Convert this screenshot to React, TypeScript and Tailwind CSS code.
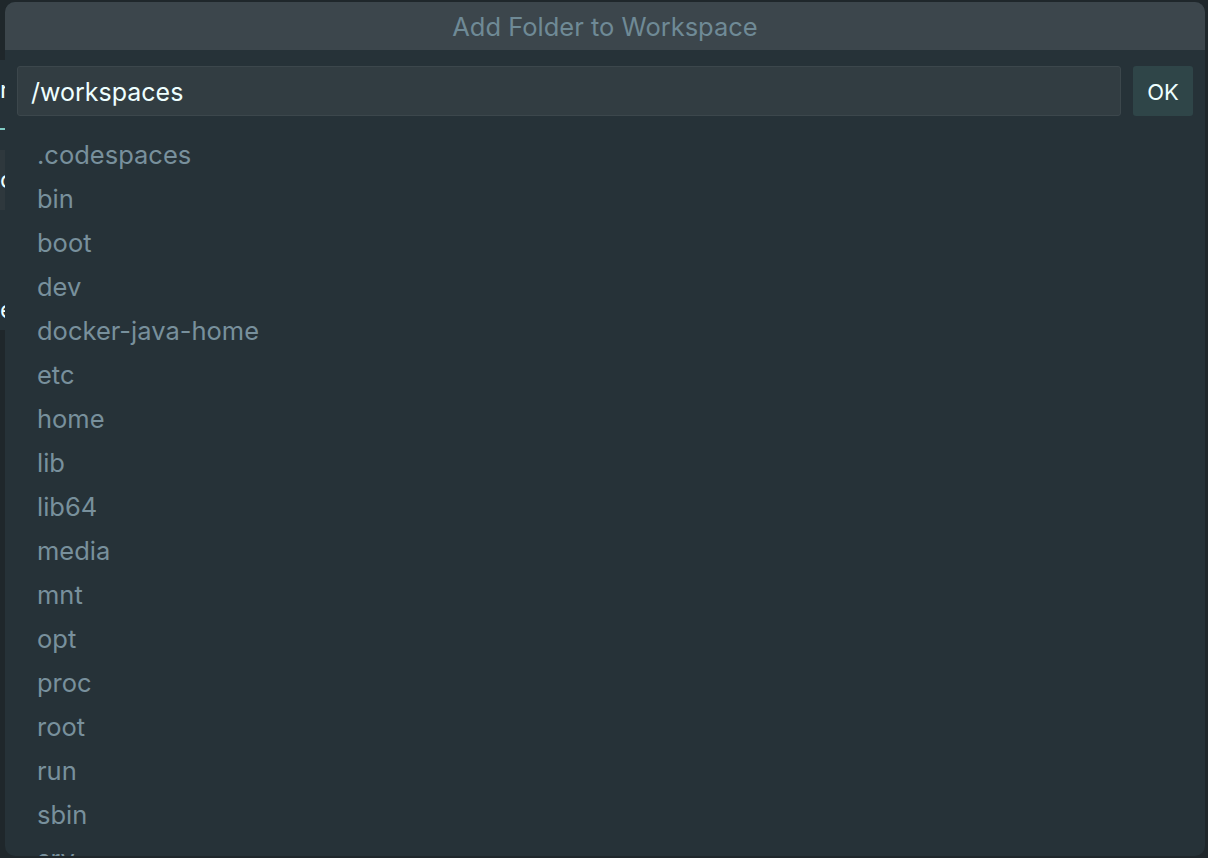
import React from 'react';

const folders = [
  '.codespaces',
  'bin',
  'boot',
  'dev',
  'docker-java-home',
  'etc',
  'home',
  'lib',
  'lib64',
  'media',
  'mnt',
  'opt',
  'proc',
  'root',
  'run',
  'sbin',
  'srv',
];

export default function App() {
  return (
    <div
      className="relative w-[1208px] h-[858px] overflow-hidden bg-[#1f272b]"
      style={{ fontFamily: 'Inter, "Noto Sans", sans-serif' }}
    >
      {/* Editor peeking out behind the dialog */}
      <div className="flex flex-col w-[12px] pt-[60px]">
        <div className="h-[68px] bg-[#263238] text-[#eeffff] text-[24px] leading-[60px]">r</div>
        <div className="h-[2px] bg-[#80cbc4]" />
        <div className="h-[20px] bg-[#263238]" />
        <div className="h-[60px] bg-[#2e383d] text-[#eeffff] text-[24px] leading-[60px]">c</div>
        <div className="h-[80px] bg-[#263238]" />
        <div className="h-[40px] bg-[#263238] text-[#eeffff] text-[24px] leading-[40px]">e</div>
      </div>

      <div className="absolute left-[5px] right-[3px] top-[2px] h-[854px] rounded-[10px] overflow-hidden bg-[#263238] flex flex-col">
        <div className="h-[48px] shrink-0 bg-[#3c464c] flex items-center justify-center pt-[3px] text-[25.5px] text-[#6f8a96]">
          Add Folder to Workspace
        </div>
        <div className="flex items-center gap-[12px] px-[12px] pt-[16px]">
          <div className="flex-1 h-[50px] rounded-[3px] border border-[#3c474c] bg-[#323d42] flex items-center px-[13px] pt-[3px] text-[25px] text-[#eeffff]">
            /workspaces
          </div>
          <button className="w-[60px] h-[50px] rounded-[3px] bg-[#2f4548] pt-[2px] text-[22px] text-[#eeffff]">OK</button>
        </div>
        <ul className="pt-[17px] pl-[32px]">
          {folders.map((name) => (
            <li key={name} className="h-[44px] flex items-center text-[25.5px] text-[#78909c]">
              {name}
            </li>
          ))}
        </ul>
      </div>
    </div>
  );
}
